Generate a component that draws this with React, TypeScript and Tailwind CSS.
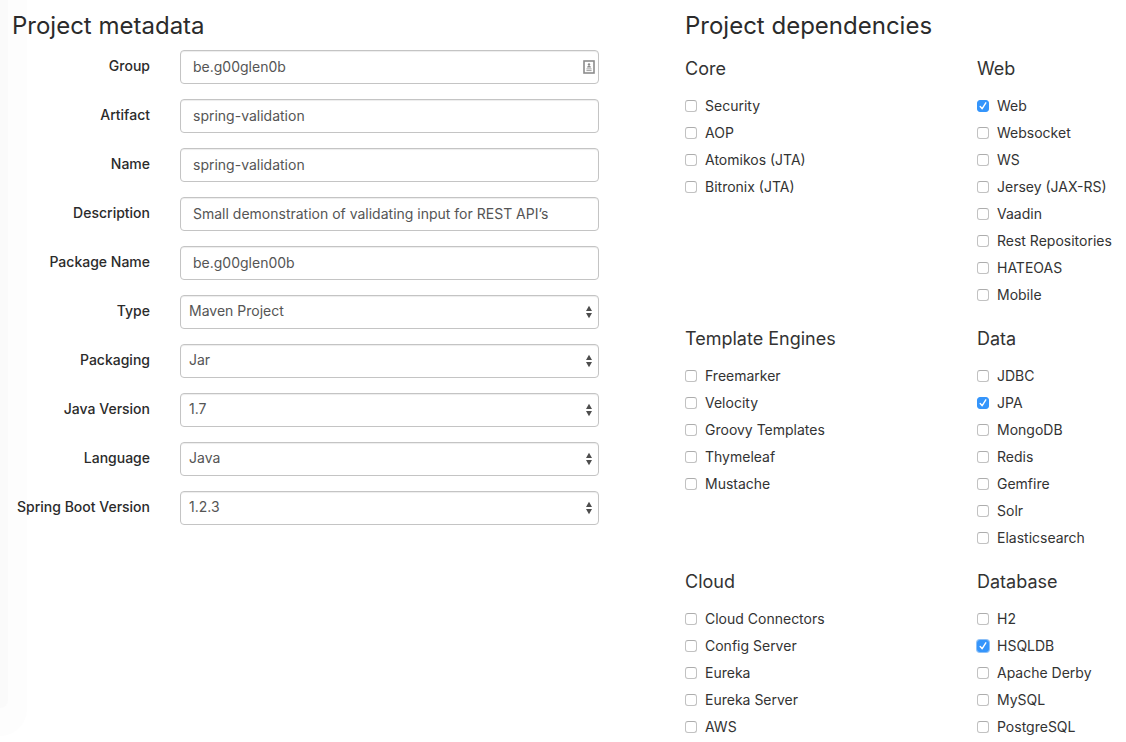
import React from 'react';

type Field = {
  id: string;
  label: string;
  value: string;
  kind: 'text' | 'select';
  contact?: boolean;
};

type Dependency = { name: string; checked?: boolean; focused?: boolean };
type Group = { title: string; items: Dependency[] };

const fields: Field[] = [
  { id: 'group', label: 'Group', value: 'be.g00glen0b', kind: 'text', contact: true },
  { id: 'artifact', label: 'Artifact', value: 'spring-validation', kind: 'text' },
  { id: 'name', label: 'Name', value: 'spring-validation', kind: 'text' },
  { id: 'description', label: 'Description', value: 'Small demonstration of validating input for REST API’s', kind: 'text' },
  { id: 'package', label: 'Package Name', value: 'be.g00glen00b', kind: 'text' },
  { id: 'type', label: 'Type', value: 'Maven Project', kind: 'select' },
  { id: 'packaging', label: 'Packaging', value: 'Jar', kind: 'select' },
  { id: 'java', label: 'Java Version', value: '1.7', kind: 'select' },
  { id: 'language', label: 'Language', value: 'Java', kind: 'select' },
  { id: 'boot', label: 'Spring Boot Version', value: '1.2.3', kind: 'select' },
];

const groups: Group[] = [
  {
    title: 'Core',
    items: [{ name: 'Security' }, { name: 'AOP' }, { name: 'Atomikos (JTA)' }, { name: 'Bitronix (JTA)' }],
  },
  {
    title: 'Web',
    items: [
      { name: 'Web', checked: true },
      { name: 'Websocket' },
      { name: 'WS' },
      { name: 'Jersey (JAX-RS)' },
      { name: 'Vaadin' },
      { name: 'Rest Repositories' },
      { name: 'HATEOAS' },
      { name: 'Mobile' },
    ],
  },
  {
    title: 'Template Engines',
    items: [
      { name: 'Freemarker' },
      { name: 'Velocity' },
      { name: 'Groovy Templates' },
      { name: 'Thymeleaf' },
      { name: 'Mustache' },
    ],
  },
  {
    title: 'Data',
    items: [
      { name: 'JDBC' },
      { name: 'JPA', checked: true },
      { name: 'MongoDB' },
      { name: 'Redis' },
      { name: 'Gemfire' },
      { name: 'Solr' },
      { name: 'Elasticsearch' },
    ],
  },
  {
    title: 'Cloud',
    items: [
      { name: 'Cloud Connectors' },
      { name: 'Config Server' },
      { name: 'Eureka' },
      { name: 'Eureka Server' },
      { name: 'AWS' },
    ],
  },
  {
    title: 'Database',
    items: [
      { name: 'H2' },
      { name: 'HSQLDB', checked: true, focused: true },
      { name: 'Apache Derby' },
      { name: 'MySQL' },
      { name: 'PostgreSQL' },
    ],
  },
];

const controlClass =
  'h-[34px] w-full appearance-none rounded border border-[#c4c4c4] bg-white pb-0.5 text-sm text-[#555] shadow-[inset_0_1px_1px_rgba(0,0,0,0.075)] outline-none';

function ContactIcon() {
  return (
    <svg className="pointer-events-none absolute top-2.5 right-1 h-[14px] w-[12px]" viewBox="0 0 12 14" aria-hidden="true">
      <rect x="1" y="1" width="10" height="12" fill="#fff" stroke="#8c8c8c" strokeWidth="1.6" />
      <circle cx="6" cy="4.4" r="1.2" fill="#8c8c8c" />
      <path d="M4 7.6c0-2.4 4-2.4 4 0z" fill="#8c8c8c" />
      <path d="M3.4 8.9h5.2M3.4 10.6h5.2" stroke="#a0a0a0" strokeWidth="1" />
    </svg>
  );
}

function SelectArrows() {
  return (
    <svg className="pointer-events-none absolute top-2.5 right-1.5 h-[14px] w-2" viewBox="0 0 8 14" aria-hidden="true">
      <path d="M4 0.8L7 6H1zM4 13.2L1 8h6z" fill="#4d4d4d" />
    </svg>
  );
}

function FieldRow({ field }: { field: Field }) {
  return (
    <div className="grid grid-cols-[138fr_419fr] items-center gap-x-[30px]">
      <label htmlFor={field.id} className="pb-0.5 text-right text-sm font-medium whitespace-nowrap text-[#2b2b2b]">
        {field.label}
      </label>
      <div className="relative">
        {field.kind === 'text' ? (
          <input id={field.id} type="text" defaultValue={field.value} className={`${controlClass} px-3`} />
        ) : (
          <select id={field.id} defaultValue={field.value} className={`${controlClass} px-2`}>
            <option>{field.value}</option>
          </select>
        )}
        {field.contact && <ContactIcon />}
        {field.kind === 'select' && <SelectArrows />}
      </div>
    </div>
  );
}

function DependencyItem({ item }: { item: Dependency }) {
  return (
    <label className="flex h-[27px] items-center gap-2 text-sm whitespace-nowrap text-[#333]">
      <span className="relative mt-px size-3 shrink-0">
        <input
          type="checkbox"
          defaultChecked={item.checked}
          className={`peer block size-3 appearance-none rounded-[3px] border border-[#c2c2c2] border-t-[#adadad] bg-white checked:border-[#3595fb] checked:bg-[#3595fb] ${
            item.focused ? 'shadow-[0_0_0_1px_#8dc0f7]' : ''
          }`}
        />
        <svg className="pointer-events-none absolute inset-0 hidden size-3 peer-checked:block" viewBox="0 0 12 12" aria-hidden="true">
          <path d="M3.2 6.5l2 2.2 3.6-5.9" fill="none" stroke="#fff" strokeWidth="1.4" strokeLinecap="round" strokeLinejoin="round" />
        </svg>
      </span>
      {item.name}
    </label>
  );
}

export default function App() {
  return (
    <div className="relative min-h-screen overflow-hidden bg-white font-['Inter','Liberation_Sans',sans-serif]">
      <div className="absolute top-0 left-0 h-[736px] w-[27px] rounded-br-[27px] bg-[#fdfdfd]" />
      <div className="absolute top-0 left-0 h-[708px] w-2 rounded-br-lg bg-[#fafafa]" />
      <main className="relative grid grid-cols-[587fr_441fr] gap-x-[86px] pt-3 pl-3">
        <section>
          <h2 className="text-2xl leading-7 text-[#2b2b2b]">Project metadata</h2>
          <form className="mt-2.5 flex flex-col gap-[15px]">
            {fields.map((field) => (
              <FieldRow key={field.id} field={field} />
            ))}
          </form>
        </section>
        <section>
          <h2 className="text-2xl leading-7 text-[#2b2b2b]">Project dependencies</h2>
          <div className="mt-[19px] grid grid-cols-[292fr_149fr] gap-y-[21px]">
            {groups.map((group) => (
              <fieldset key={group.title} className="min-w-0">
                <legend className="mb-[13px] text-lg leading-5 text-[#333]">{group.title}</legend>
                {group.items.map((item) => (
                  <DependencyItem key={item.name} item={item} />
                ))}
              </fieldset>
            ))}
          </div>
        </section>
      </main>
    </div>
  );
}
